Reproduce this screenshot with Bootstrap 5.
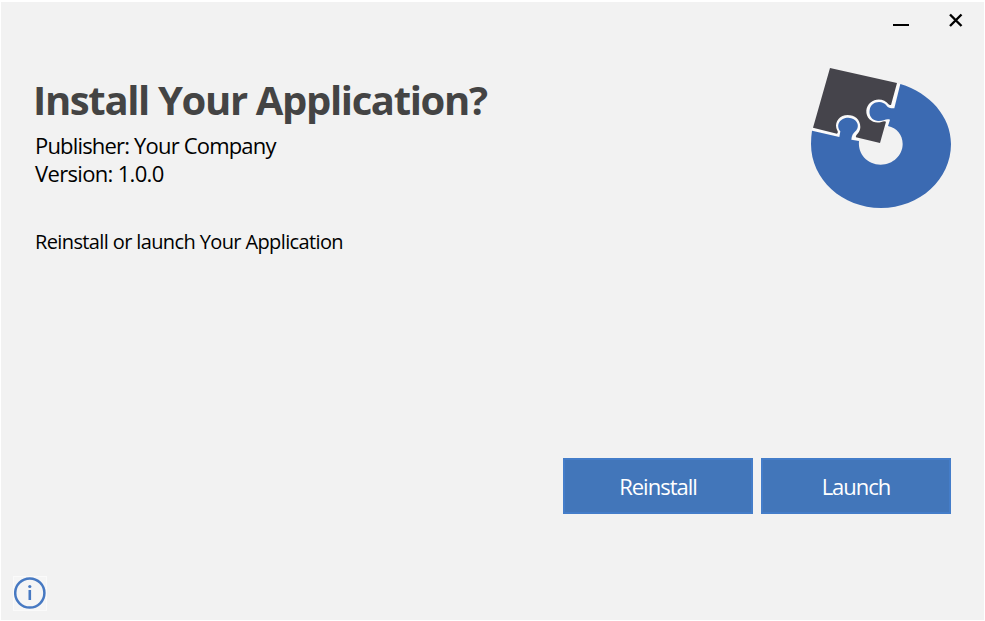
<!DOCTYPE html>
<html lang="en">
<head>
<meta charset="utf-8">
<meta name="viewport" content="width=device-width, initial-scale=1">
<title>Install Your Application?</title>
<link href="https://cdn.jsdelivr.net/npm/bootstrap@5.3.0/dist/css/bootstrap.min.css" rel="stylesheet">
<style>
  body { font-family: "Segoe UI", "Open Sans", "Noto Sans", sans-serif; background: #fff; color: #000; }
  .installer { height: 621px; border: solid #fff; border-width: 2px 1px 1px; background-clip: padding-box; background-color: #f2f2f2; }
  .titlebar { height: 50px; padding: 10px 19px 0 0; gap: 38px; }
  .titlebar .btn { line-height: 0; }
  .intro { padding: 16px 33px 0 34px; height: 406px; }
  .app-title { font-size: 40px; font-weight: 700; line-height: 56px; color: #444; letter-spacing: -1.35px; margin: 4px 0 3px -2px; white-space: nowrap; }
  .meta { font-size: 22px; line-height: 28px; letter-spacing: -.82px; }
  .version { letter-spacing: -.67px; }
  .prompt { font-size: 20px; line-height: 28px; letter-spacing: -.62px; margin-top: 41px; }
  .actions { padding-right: 33px; gap: 8px; }
  .action { width: 190px; height: 56px; border-radius: 0; font-size: 22px; letter-spacing: -1px; color: #fff; background: #4276ba; border: 2px solid #447dc9; padding: 0; }
  .action:hover { color: #fff; background: #3a6cae; }
  .info { margin: 0 0 9px 12px; width: 34px; height: 35px; background: #f5f5f5; border: 1px solid #fafafa; }
</style>
</head>
<body>
<main class="installer d-flex flex-column">
  <header class="titlebar d-flex justify-content-end align-items-start">
    <button class="btn p-0 border-0 rounded-0" aria-label="Minimize"><svg width="16" height="16" viewBox="0 0 16 16"><path d="M0 12h16v2H0z"/></svg></button>
    <button class="btn p-0 border-0 rounded-0" aria-label="Close"><svg width="18" height="18" viewBox="0 0 18 18"><path d="M3 2.5 14.5 14M14.5 2.5 3 14" stroke="#000" stroke-width="2.4"/></svg></button>
  </header>
  <section class="intro d-flex justify-content-between align-items-start">
    <div>
      <h1 class="app-title">Install Your Application?</h1>
      <div class="meta">Publisher: Your Company</div>
      <div class="meta version">Version: 1.0.0</div>
      <p class="prompt mb-0">Reinstall or launch Your Application</p>
    </div>
    <svg class="flex-shrink-0" width="140" height="140" viewBox="33 24 420 420" aria-label="Application logo">
      <g stroke="#fbfbfb" stroke-width="16" stroke-linejoin="round" fill="none">
        <path d="M296 71 277 141 262 137C249 118 218 116 207 138C195 164 215 187 237 186C249 186 257 180 266 181L259 201M36 207 117 226 118 214C105 196 121 173 145 173C169 174 186 196 172 215Q163 225 161 234L176 239" stroke-width="10"/>
      </g>
      <path fill="#3b6ab2" d="M301 72C390 99 453 170 453 252C453 358 359 444 243 444C127 444 33 358 33 252Q33 231 36 212L118 231L121 214C106 195 120 173 145 173C170 174 183 198 166 214Q155 223 154 239L177 243C173 282 202 314 242 314C279 314 308 286 308 252C308 224 290 204 264 198L270 179C259 174 250 184 234 183C215 181 206 166 209 150C213 124 246 119 260 137Q266 146 283 145Z"/>
      <path fill="#45444b" d="M90 24 291 69 273 135C267 136 262 127 253 122C230 111 202 125 199 151C197 178 222 193 244 186Q253 182 258 185L240 249 168 232C165 225 181 218 181 201C181 178 164 165 143 165C120 165 104 184 109 204C111 213 117 215 111 221L39 203Z"/>
    </svg>
  </section>
  <div class="actions d-flex justify-content-end">
    <button class="btn action">Reinstall</button>
    <button class="btn action">Launch</button>
  </div>
  <footer class="mt-auto d-flex">
    <button class="btn info p-0 rounded-0 d-flex" aria-label="Information"><svg width="32" height="33" viewBox="0 0 32 33"><circle cx="15.8" cy="16" r="14.6" fill="none" stroke="#4779c2" stroke-width="2.5"/><circle cx="15.8" cy="9.5" r="1.6" fill="#4779c2"/><path d="M14.5 13h2.6v10h-2.6z" fill="#4779c2"/></svg></button>
  </footer>
</main>
<script src="https://cdn.jsdelivr.net/npm/bootstrap@5.3.0/dist/js/bootstrap.bundle.min.js"></script>
</body>
</html>
